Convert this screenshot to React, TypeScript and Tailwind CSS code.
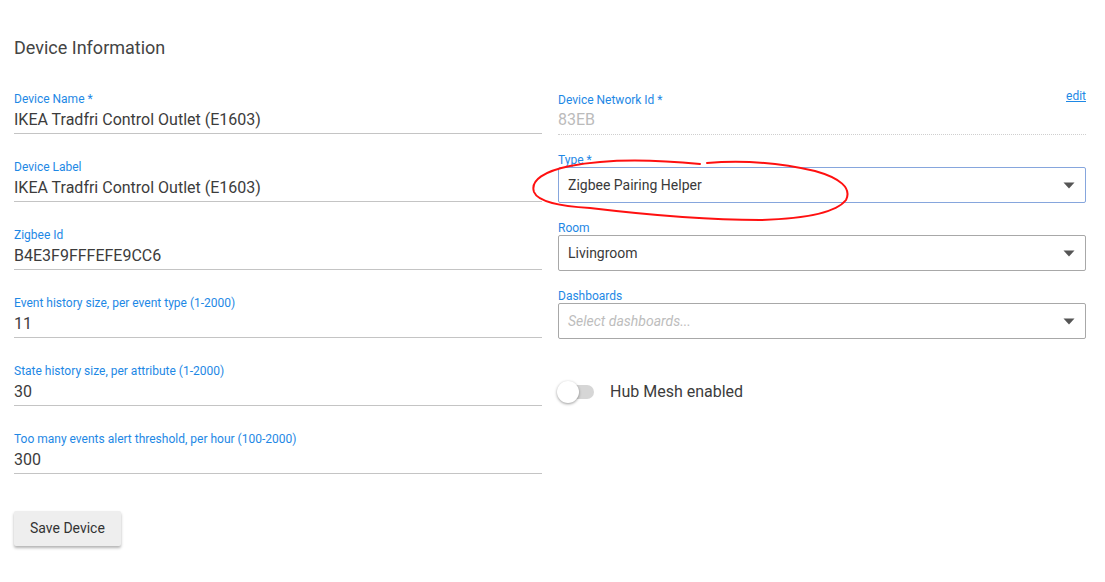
import React from 'react';

const font = { fontFamily: 'Roboto, "Liberation Sans", sans-serif' };

interface FieldProps {
    label: string;
    value: string;
}

// Underlined text field, material style
const TextField: React.FC<FieldProps> = ({ label, value }) => (
    <div className="flex flex-col">
        <label className="text-[12px] leading-[14px] text-[#1e88e5]">{label}</label>
        <div className="h-[28px] text-[16px] leading-[27px] text-[#3c3c3c] border-b border-[#c4c4c4]">{value}</div>
    </div>
);

const Arrow = () => (
    <svg width="12" height="7" viewBox="0 0 12 7" className="shrink-0">
        <path d="M0.5 0.5 L11.5 0.5 L6 6.5 Z" fill="#555" />
    </svg>
);

interface SelectProps {
    label: string;
    value?: string;
    placeholder?: string;
    focused?: boolean;
}

const SelectField: React.FC<SelectProps> = ({ label, value, placeholder, focused }) => (
    <div className="flex flex-col mt-[18px]">
        <label className="text-[12px] leading-[14px] text-[#1e88e5]">{label}</label>
        <div
            className={`h-[36px] flex items-center justify-between pl-[9px] pr-[10px] rounded-[2px] border ${focused ? 'border-[#86a6dd]' : 'border-[#a8a8a8]'}`}
        >
            {value ? (
                <span className="text-[14px] text-[#3a3a3a]">{value}</span>
            ) : (
                <span className="text-[14px] italic text-[#bdbdbd]">{placeholder}</span>
            )}
            <Arrow />
        </div>
    </div>
);

export default function App() {
    return (
        <div className="relative w-[1105px] h-[582px] bg-white overflow-hidden" style={font}>
            <div className="pl-[14px] pt-[37px]">
                <h2 className="text-[18px] leading-[22px] text-[#444]">Device Information</h2>

                <div className="grid grid-cols-2 gap-x-4 w-[1072px] mt-[33px] items-start">
                    {/* Left column */}
                    <div className="flex flex-col gap-[26px]">
                        <TextField label="Device Name *" value="IKEA Tradfri Control Outlet (E1603)" />
                        <TextField label="Device Label" value="IKEA Tradfri Control Outlet (E1603)" />
                        <TextField label="Zigbee Id" value="B4E3F9FFFEFE9CC6" />
                        <TextField label="Event history size, per event type (1-2000)" value="11" />
                        <TextField label="State history size, per attribute (1-2000)" value="30" />
                        <TextField label="Too many events alert threshold, per hour (100-2000)" value="300" />
                        <div className="mt-[11px]">
                            <button className="h-[35px] px-4 bg-[#eeeeee] text-[14px] text-[#333] rounded-[2px] shadow-[0_2px_3px_rgba(0,0,0,0.3)]">
                                Save Device
                            </button>
                        </div>
                    </div>

                    {/* Right column */}
                    <div className="flex flex-col pt-px">
                        <div className="flex flex-col">
                            <div className="flex justify-between items-start">
                                <label className="text-[12px] leading-[14px] text-[#1e88e5]">Device Network Id *</label>
                                <a href="#" className="text-[12px] leading-[14px] text-[#1e88e5] underline -mt-[4px]">edit</a>
                            </div>
                            <div className="h-[28px] text-[16px] leading-[26px] text-[#bbbbbb] border-b border-dotted border-[#cfcfcf]">83EB</div>
                        </div>
                        <SelectField label="Type *" value="Zigbee Pairing Helper" focused />
                        <SelectField label="Room" value="Livingroom" />
                        <SelectField label="Dashboards" placeholder="Select dashboards..." />

                        <div className="flex items-center mt-[42px] h-[22px]">
                            <div className="relative w-[36px] h-[14px] rounded-full bg-[#d6d6d6]">
                                <div className="absolute -left-[1px] -top-[4px] w-[22px] h-[22px] rounded-full bg-white shadow-[0_1px_3px_rgba(0,0,0,0.4)]" />
                            </div>
                            <span className="ml-[16px] text-[16px] text-[#3c3c3c]">Hub Mesh enabled</span>
                        </div>
                    </div>
                </div>
            </div>

            {/* Hand-drawn annotation */}
            <svg className="absolute inset-0 pointer-events-none" width="1105" height="582" viewBox="0 0 1105 582">
                <path
                    d="M700 164 C 660 160, 610 158, 570 166 C 545 171, 530 180, 534 192 C 538 202, 560 206, 590 208 C 640 214, 700 220, 760 220 C 800 219, 835 214, 846 200 C 852 188, 840 178, 815 171 C 780 163, 740 160, 707 163"
                    fill="none"
                    stroke="#ff1010"
                    strokeWidth="2"
                    strokeLinecap="round"
                />
            </svg>
        </div>
    );
}
